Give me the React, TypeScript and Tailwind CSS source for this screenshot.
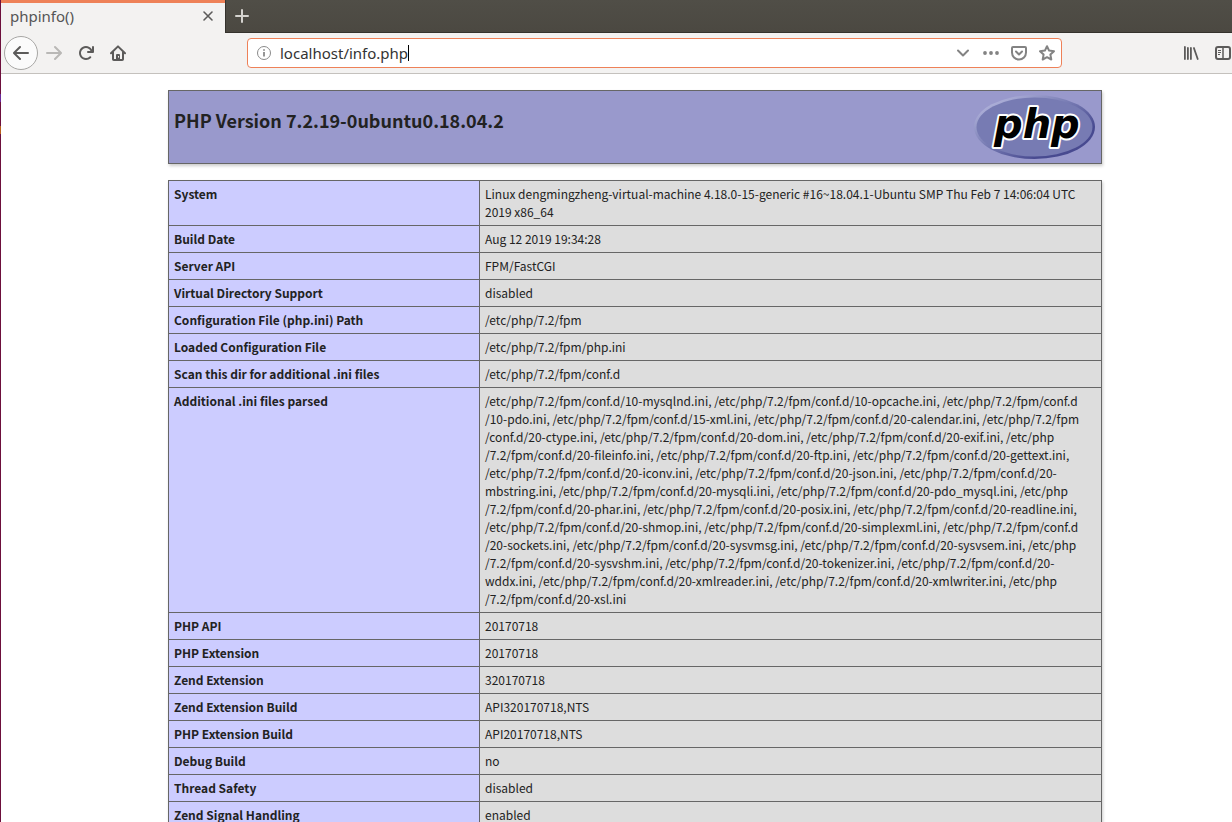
import { useState } from 'react';

type Row = { name: string; lines: string[] };

const rows: Row[] = [
  {
    name: 'System',
    lines: [
      'Linux dengmingzheng-virtual-machine 4.18.0-15-generic #16~18.04.1-Ubuntu SMP Thu Feb 7 14:06:04 UTC',
      '2019 x86_64',
    ],
  },
  { name: 'Build Date', lines: ['Aug 12 2019 19:34:28'] },
  { name: 'Server API', lines: ['FPM/FastCGI'] },
  { name: 'Virtual Directory Support', lines: ['disabled'] },
  { name: 'Configuration File (php.ini) Path', lines: ['/etc/php/7.2/fpm'] },
  { name: 'Loaded Configuration File', lines: ['/etc/php/7.2/fpm/php.ini'] },
  { name: 'Scan this dir for additional .ini files', lines: ['/etc/php/7.2/fpm/conf.d'] },
  {
    name: 'Additional .ini files parsed',
    lines: [
      '/etc/php/7.2/fpm/conf.d/10-mysqlnd.ini, /etc/php/7.2/fpm/conf.d/10-opcache.ini, /etc/php/7.2/fpm/conf.d',
      '/10-pdo.ini, /etc/php/7.2/fpm/conf.d/15-xml.ini, /etc/php/7.2/fpm/conf.d/20-calendar.ini, /etc/php/7.2/fpm',
      '/conf.d/20-ctype.ini, /etc/php/7.2/fpm/conf.d/20-dom.ini, /etc/php/7.2/fpm/conf.d/20-exif.ini, /etc/php',
      '/7.2/fpm/conf.d/20-fileinfo.ini, /etc/php/7.2/fpm/conf.d/20-ftp.ini, /etc/php/7.2/fpm/conf.d/20-gettext.ini,',
      '/etc/php/7.2/fpm/conf.d/20-iconv.ini, /etc/php/7.2/fpm/conf.d/20-json.ini, /etc/php/7.2/fpm/conf.d/20-',
      'mbstring.ini, /etc/php/7.2/fpm/conf.d/20-mysqli.ini, /etc/php/7.2/fpm/conf.d/20-pdo_mysql.ini, /etc/php',
      '/7.2/fpm/conf.d/20-phar.ini, /etc/php/7.2/fpm/conf.d/20-posix.ini, /etc/php/7.2/fpm/conf.d/20-readline.ini,',
      '/etc/php/7.2/fpm/conf.d/20-shmop.ini, /etc/php/7.2/fpm/conf.d/20-simplexml.ini, /etc/php/7.2/fpm/conf.d',
      '/20-sockets.ini, /etc/php/7.2/fpm/conf.d/20-sysvmsg.ini, /etc/php/7.2/fpm/conf.d/20-sysvsem.ini, /etc/php',
      '/7.2/fpm/conf.d/20-sysvshm.ini, /etc/php/7.2/fpm/conf.d/20-tokenizer.ini, /etc/php/7.2/fpm/conf.d/20-',
      'wddx.ini, /etc/php/7.2/fpm/conf.d/20-xmlreader.ini, /etc/php/7.2/fpm/conf.d/20-xmlwriter.ini, /etc/php',
      '/7.2/fpm/conf.d/20-xsl.ini',
    ],
  },
  { name: 'PHP API', lines: ['20170718'] },
  { name: 'PHP Extension', lines: ['20170718'] },
  { name: 'Zend Extension', lines: ['320170718'] },
  { name: 'Zend Extension Build', lines: ['API320170718,NTS'] },
  { name: 'PHP Extension Build', lines: ['API20170718,NTS'] },
  { name: 'Debug Build', lines: ['no'] },
  { name: 'Thread Safety', lines: ['disabled'] },
  { name: 'Zend Signal Handling', lines: ['enabled'] },
];

function BackIcon() {
  return (
    <svg viewBox="0 0 16 16" className="size-4 fill-[#5c5b5a]">
      <path d="M15 7H3.414l4.293-4.293a1 1 0 0 0-1.414-1.414l-6 6a1 1 0 0 0 0 1.414l6 6a1 1 0 0 0 1.414-1.414L3.414 9H15a1 1 0 0 0 0-2z" />
    </svg>
  );
}

function ForwardIcon() {
  return (
    <svg viewBox="0 0 16 16" className="size-4 fill-[#b9b8b6]">
      <path d="M15.707 7.293l-6-6a1 1 0 0 0-1.414 1.414L12.586 7H1a1 1 0 0 0 0 2h11.586l-4.293 4.293a1 1 0 1 0 1.414 1.414l6-6a1 1 0 0 0 0-1.414z" />
    </svg>
  );
}

function ReloadIcon() {
  return (
    <svg viewBox="0 0 16 16" className="size-4 fill-[#5c5b5a]">
      <path d="M15 1a1 1 0 0 0-1 1v2.418A6.995 6.995 0 1 0 8 15a6.954 6.954 0 0 0 4.95-2.05 1 1 0 0 0-1.414-1.414A5.019 5.019 0 1 1 12.549 6H10a1 1 0 0 0 0 2h5a1 1 0 0 0 1-1V2a1 1 0 0 0-1-1z" />
    </svg>
  );
}

function HomeIcon() {
  return (
    <svg viewBox="0 0 16 16" fill="none" stroke="#5c5b5a" className="size-4">
      <path d="M1 8.2L8 1.4l7 6.8" strokeWidth="2" strokeLinecap="round" strokeLinejoin="round" />
      <path d="M3 7v7.2a.8.8 0 0 0 .8.8h8.4a.8.8 0 0 0 .8-.8V7" strokeWidth="2" />
      <path d="M6 15v-5a1 1 0 0 1 1-1h2a1 1 0 0 1 1 1v5z" fill="#5c5b5a" stroke="none" />
      <path d="M8.5 11v1.6" stroke="#f3f2f1" />
    </svg>
  );
}

function InfoIcon() {
  return (
    <svg viewBox="0 0 16 16" className="size-4 shrink-0" fill="none" stroke="#8a8a8a">
      <circle cx="8" cy="8" r="6.5" />
      <path d="M8 7v4.5M8 4.2v1.6" strokeWidth="1.8" />
    </svg>
  );
}

function ChevronIcon() {
  return (
    <svg viewBox="0 0 16 16" className="size-4" fill="none" stroke="#838383" strokeWidth="2">
      <path d="M3 5.5l5 5 5-5" strokeLinecap="round" strokeLinejoin="round" />
    </svg>
  );
}

function DotsIcon() {
  return (
    <svg viewBox="0 0 16 16" className="size-4 fill-[#838383]">
      <circle cx="2" cy="8" r="1.9" />
      <circle cx="8" cy="8" r="1.9" />
      <circle cx="14" cy="8" r="1.9" />
    </svg>
  );
}

function PocketIcon() {
  return (
    <svg viewBox="0 0 16 16" className="size-4" fill="none" stroke="#838383" strokeWidth="2" strokeLinecap="round" strokeLinejoin="round">
      <path d="M2 2h12a1 1 0 0 1 1 1v4.5a7 7 0 0 1-14 0V3a1 1 0 0 1 1-1z" />
      <path d="M5 6.5l3 3 3-3" />
    </svg>
  );
}

function StarIcon() {
  return (
    <svg viewBox="0 0 16 16" className="size-4" fill="none" stroke="#838383" strokeWidth="2" strokeLinejoin="round">
      <path d="M8 1.2l2.1 4.4 4.9.6-3.6 3.4.9 4.9L8 12.2l-4.3 2.3.9-4.9L1 6.2l4.9-.6z" />
    </svg>
  );
}

function LibraryIcon() {
  return (
    <svg viewBox="0 0 16 16" className="size-4" fill="none" stroke="#5c5b5a" strokeWidth="1.8" strokeLinecap="round">
      <path d="M1.900 2v12M4.900 3v11M7.900 3v11M10.900 3l3.800 11" />
    </svg>
  );
}

function SidebarIcon() {
  return (
    <svg viewBox="0 0 16 16" className="size-4" fill="none" stroke="#5c5b5a">
      <rect x="1" y="2" width="14" height="12" rx="2" strokeWidth="2" />
      <path d="M8 2v12" strokeWidth="1.5" />
      <path d="M3 5.5h3M3 7.5h3M3 9.5h2" />
    </svg>
  );
}

function PhpLogo() {
  return (
    <svg viewBox="0 0 122 66" className="h-[66px] w-[122px]" role="img" aria-label="PHP logo">
      <defs>
        <linearGradient id="rim" x1="0" y1="0" x2="1" y2="1">
          <stop offset="0.1" stopColor="#b3b5dc" />
          <stop offset="0.45" stopColor="#777bb3" />
          <stop offset="0.75" stopColor="#484a90" />
        </linearGradient>
      </defs>
      <ellipse cx="60.5" cy="33" rx="60.5" ry="32" fill="url(#rim)" />
      <ellipse cx="60.5" cy="33" rx="58" ry="29.5" fill="#777bb3" />
      <text
        x="20"
        y="44"
        className="font-['DejaVu_Sans'] text-[40px] font-bold italic"
        stroke="#fff"
        strokeWidth="4"
        strokeLinejoin="round"
        paintOrder="stroke"
      >
        php
      </text>
    </svg>
  );
}

function TabBar() {
  return (
    <div className="flex h-[33px] bg-linear-to-b from-[#504e47] to-[#4b4841]">
      <div className="flex w-[224px] items-center justify-between border-t-3 border-[#ee8158] bg-[#f3f2f1] px-[9px] pb-1">
        <span className="font-['Noto_Sans',sans-serif] text-[15px] text-[#555]">phpinfo()</span>
        <button type="button" aria-label="Close tab">
          <svg viewBox="0 0 16 16" className="size-4" stroke="#5c5b5a" strokeWidth="1.6" strokeLinecap="round">
            <path d="M4 4l8 8M12 4l-8 8" />
          </svg>
        </button>
      </div>
      <div className="flex flex-1 items-center border-b border-l border-[#34322d] pl-2">
        <button type="button" aria-label="New tab">
          <svg viewBox="0 0 16 16" className="size-4" stroke="#d5d3cf" strokeWidth="2" strokeLinecap="round">
            <path d="M8 2v12M2 8h12" />
          </svg>
        </button>
      </div>
    </div>
  );
}

function NavBar() {
  const [url, setUrl] = useState('localhost/info.php');

  return (
    <nav className="flex h-[41px] items-center border-b border-[#c4c1bd] bg-[#f3f2f1] pl-[3px]">
      <div className="flex w-[243px] items-center">
        <button type="button" aria-label="Back" className="flex size-[34px] items-center justify-center rounded-full border border-[#a8a7a5] bg-[#fbfbfb]">
          <BackIcon />
        </button>
        <div className="flex gap-4 pl-2">
          <button type="button" aria-label="Forward"><ForwardIcon /></button>
          <button type="button" aria-label="Reload"><ReloadIcon /></button>
          <button type="button" aria-label="Home"><HomeIcon /></button>
        </div>
      </div>

      <div className="flex h-[30px] flex-1 items-center rounded-[4px] border border-[#ee8158] bg-white pr-[6px] pl-2">
        <InfoIcon />
        <div className="flex flex-1 items-center pl-2">
          <input
            aria-label="Address"
            value={url}
            onChange={(e) => setUrl(e.target.value)}
            className="field-sizing-content font-['Noto_Sans',sans-serif] text-[15px] text-[#333] outline-none"
          />
          <span className="h-4 w-px bg-black" />
        </div>
        <div className="flex gap-3">
          <button type="button" aria-label="Show history"><ChevronIcon /></button>
          <button type="button" aria-label="Page actions"><DotsIcon /></button>
          <button type="button" aria-label="Save to Pocket"><PocketIcon /></button>
          <button type="button" aria-label="Bookmark this page"><StarIcon /></button>
        </div>
      </div>

      <div className="flex gap-4 pr-px pl-[121px]">
        <button type="button" aria-label="Library"><LibraryIcon /></button>
        <button type="button" aria-label="Sidebars"><SidebarIcon /></button>
      </div>
    </nav>
  );
}

export default function App() {
  return (
    <div className="flex h-screen overflow-hidden bg-white">
      {/* Sliver of the desktop behind the window */}
      <div className="flex w-px shrink-0 flex-col bg-[#6d0f3c]">
        <span className="mt-[94px] h-2 bg-[#6a2a9a]" />
        <span className="mt-6 h-2 bg-[#b8601a]" />
      </div>

      <div className="flex min-w-0 flex-1 flex-col">
        <TabBar />
        <NavBar />

        <main className="flex flex-1 flex-col items-center gap-4 overflow-hidden pt-4 pl-[37px] font-['Noto_Sans_CJK_SC',sans-serif] text-[#222]">
          <header className="flex w-[934px] shrink-0 justify-between border border-[#666] bg-[#9999cc] px-[5px] py-[3px] shadow-[1px_2px_3px_#ccc]">
            <h1 className="pt-[13px] text-[18px] leading-[27px] font-bold">PHP Version 7.2.19-0ubuntu0.18.04.2</h1>
            <a href="http://www.php.net/"><PhpLogo /></a>
          </header>

          <table className="w-[934px] table-fixed border-collapse text-[12px] leading-[18px] shadow-[1px_2px_3px_#ccc]">
            <tbody>
              {rows.map((row) => (
                <tr key={row.name}>
                  <th scope="row" className="w-[311px] border border-[#666] bg-[#ccccff] px-[5px] py-1 text-left align-top font-bold">
                    {row.name}
                  </th>
                  <td className="border border-[#666] bg-[#dddddd] px-[5px] py-1 align-top">
                    {row.lines.map((line) => (
                      <div key={line} className="whitespace-nowrap">{line}</div>
                    ))}
                  </td>
                </tr>
              ))}
            </tbody>
          </table>
        </main>
      </div>
    </div>
  );
}
